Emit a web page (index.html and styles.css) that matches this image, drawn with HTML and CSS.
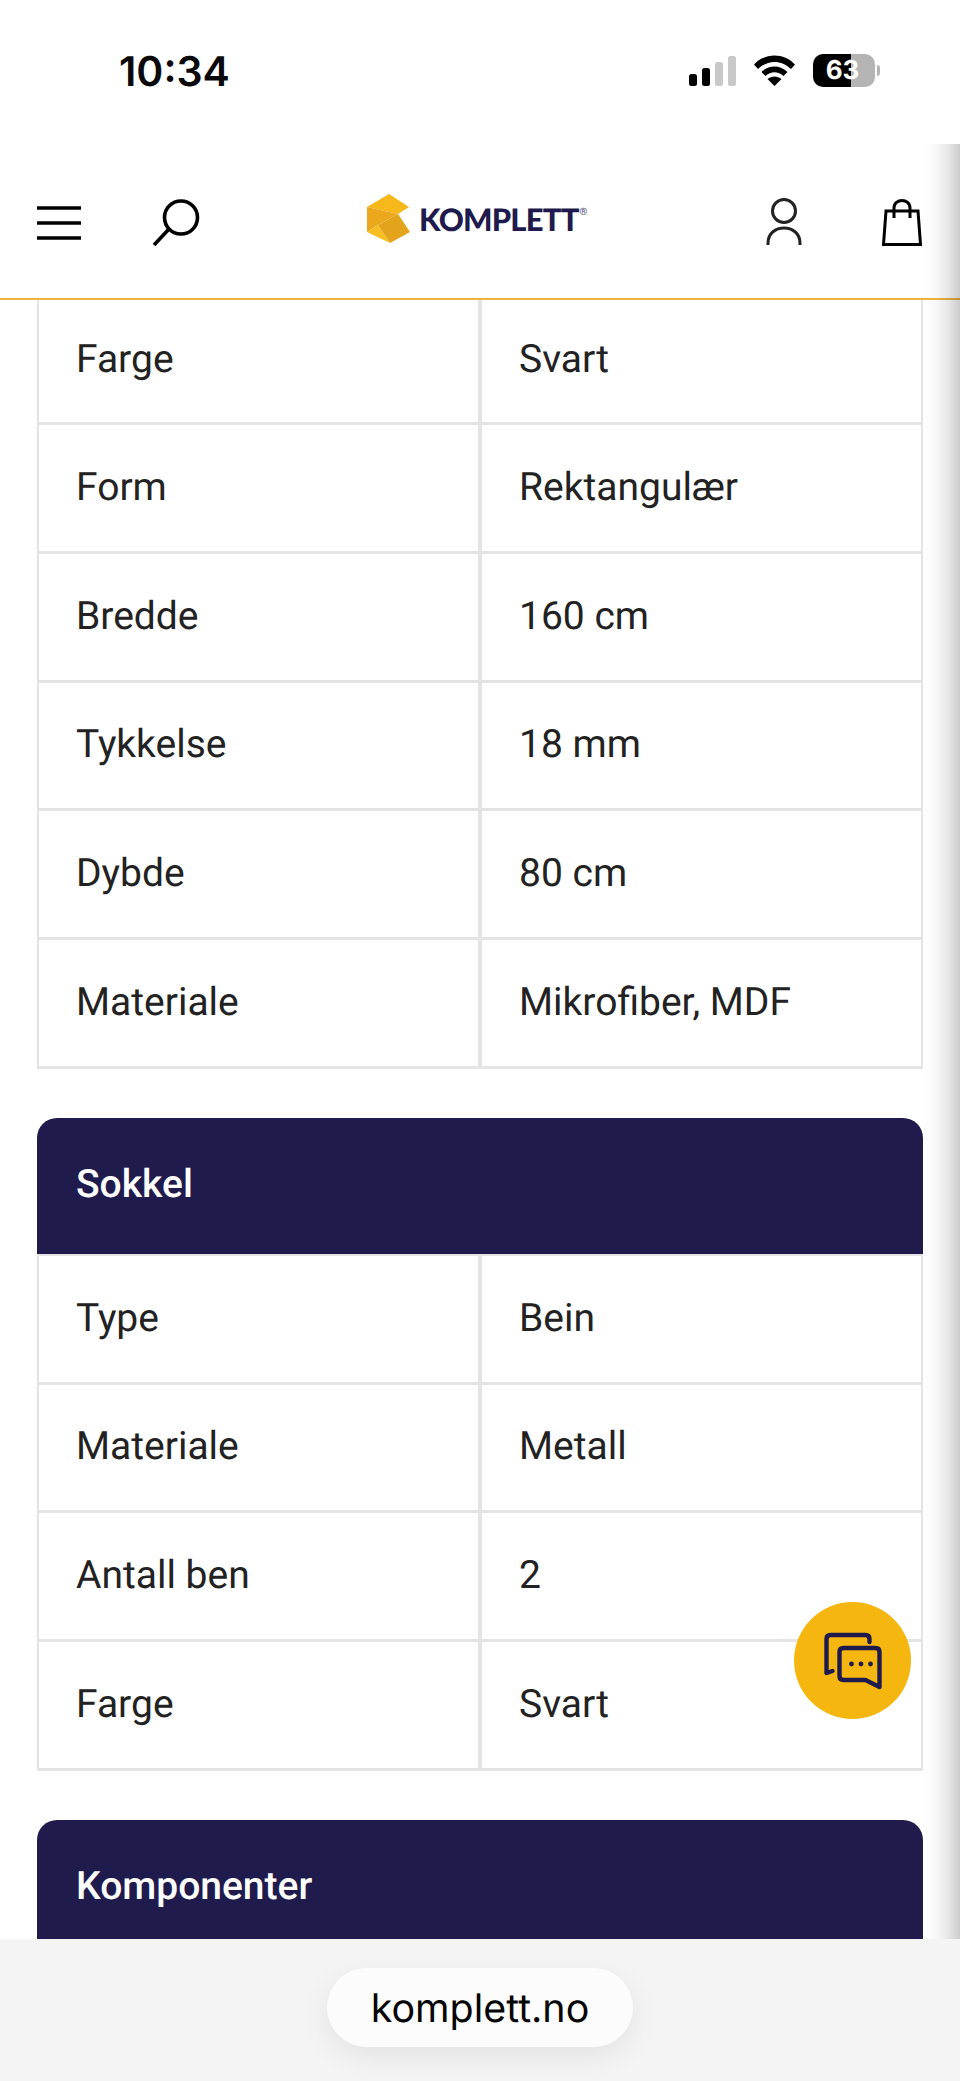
FILE: index.html
```html
<!DOCTYPE html>
<html lang="en">
<head>
    <meta charset="UTF-8">
    <meta name="viewport" content="width=device-width, initial-scale=1.0">
    <title>Komplett</title>
    <link rel="stylesheet" href="styles.css">
</head>
<body>
    <div class="status-bar">
        <span class="status-time">10:34</span>
        <div class="status-icons">
            <svg class="icon-signal" width="47" height="31" viewBox="0 0 47 31">
                <rect x="0" y="19" width="8" height="12" rx="2.5" fill="#000"/>
                <rect x="13" y="13" width="8" height="18" rx="2.5" fill="#000"/>
                <rect x="26" y="7" width="8" height="24" rx="2.5" fill="#c9c9c9"/>
                <rect x="39" y="1" width="8" height="30" rx="2.5" fill="#c9c9c9"/>
            </svg>
            <svg class="icon-wifi" width="41" height="31" viewBox="0 0 41 31">
                <path d="M0 9.500 C11 -2.500 30 -2.500 41 9.500 L37 14 C27.500 4.500 13.500 4.500 4 14 Z" fill="#000"/>
                <path d="M7.500 17 C14.500 9.500 26.500 9.500 33.500 17 L29.500 21 C24 16 17 16 11.500 21 Z" fill="#000"/>
                <path d="M20.500 31 L13.500 24 C18 20.500 23 20.500 27.500 24 Z" fill="#000"/>
            </svg>
            <div class="battery">
                <span class="battery-level">63</span>
            </div>
        </div>
    </div>

    <header class="site-header">
        <div class="header-left">
            <svg width="46" height="36" viewBox="0 0 46 36">
                <path d="M1 3 H45 M1 18 H45 M1 33 H45" stroke="#000" stroke-width="3.4"/>
            </svg>
            <svg width="48" height="48" viewBox="0 0 48 48">
                <circle cx="29" cy="18.500" r="16.500" fill="none" stroke="#000" stroke-width="3.6"/>
                <path d="M17 30 L2 46" stroke="#000" stroke-width="3.6"/>
            </svg>
        </div>
        <div class="logo">
            <svg width="44" height="50" viewBox="0 0 44 50">
                <path d="M23 0 L43 13 L32 20 L1 13 Z" fill="#f6b81a"/>
                <path d="M1 13 L32 20 L12 31 L1 38 Z" fill="#eca81c"/>
                <path d="M1 38 L12 31 L24 49 Z" fill="#f7bd22"/>
                <path d="M12 31 L32 20 L44 38 L24 49 Z" fill="#e3a31a"/>
            </svg>
            <span class="logo-text">KOMPLETT</span>
            <span class="logo-reg">®</span>
        </div>
        <div class="header-right">
            <svg width="36" height="48" viewBox="0 0 36 48">
                <circle cx="18" cy="13" r="11.500" fill="none" stroke="#222" stroke-width="3"/>
                <path d="M2 47 V45 C2 25 34 25 34 45 V47" fill="none" stroke="#222" stroke-width="3"/>
            </svg>
            <svg width="40" height="47" viewBox="0 0 40 47">
                <path d="M4 12 H36 L38.500 45.500 H1.500 Z" fill="none" stroke="#000" stroke-width="3"/>
                <path d="M12 19 V9 C12 -1 28 -1 28 9 V19" fill="none" stroke="#000" stroke-width="3"/>
            </svg>
        </div>
    </header>

    <main class="specs">
        <div class="spec-table">
            <div class="spec-row spec-row-cut"><div class="spec-cell">Farge</div><div class="spec-cell">Svart</div></div>
            <div class="spec-row"><div class="spec-cell">Form</div><div class="spec-cell">Rektangulær</div></div>
            <div class="spec-row"><div class="spec-cell">Bredde</div><div class="spec-cell">160 cm</div></div>
            <div class="spec-row"><div class="spec-cell">Tykkelse</div><div class="spec-cell">18 mm</div></div>
            <div class="spec-row"><div class="spec-cell">Dybde</div><div class="spec-cell">80 cm</div></div>
            <div class="spec-row"><div class="spec-cell">Materiale</div><div class="spec-cell">Mikrofiber, MDF</div></div>
        </div>

        <h2 class="spec-title">Sokkel</h2>
        <div class="spec-table">
            <div class="spec-row"><div class="spec-cell">Type</div><div class="spec-cell">Bein</div></div>
            <div class="spec-row"><div class="spec-cell">Materiale</div><div class="spec-cell">Metall</div></div>
            <div class="spec-row"><div class="spec-cell">Antall ben</div><div class="spec-cell">2</div></div>
            <div class="spec-row"><div class="spec-cell">Farge</div><div class="spec-cell">Svart</div></div>
        </div>

        <h2 class="spec-title">Komponenter</h2>
    </main>

    <div class="edge-shadow"></div>

    <button class="chat-button" type="button" aria-label="Chat">
        <svg width="60" height="60" viewBox="1.500 2 60 60">
            <path d="M48 13 V10 C48 7.500 46.500 6 44 6 H9 C6.500 6 5 7.500 5 10 V44 L11 42" fill="none" stroke="#1f1a4d" stroke-width="4.400" stroke-linecap="round" stroke-linejoin="round"/>
            <path d="M22 19 H54 C56.500 19 58 20.500 58 23 V58 L44 51 H22 C19.500 51 18 49.500 18 47 V23 C18 20.500 19.500 19 22 19 Z" fill="none" stroke="#1f1a4d" stroke-width="4.400" stroke-linejoin="round"/>
            <circle cx="30" cy="35" r="2.400" fill="#1f1a4d"/>
            <circle cx="39.500" cy="35" r="2.400" fill="#1f1a4d"/>
            <circle cx="49" cy="35" r="2.400" fill="#1f1a4d"/>
        </svg>
    </button>

    <div class="address-bar">
        <div class="address-pill">komplett.no</div>
    </div>
</body>
</html>
```

FILE: styles.css
```css
html, body {
  margin: 0;
  padding: 0;
}
body {
  width: 960px;
  height: 2081px;
  overflow: hidden;
  position: relative;
  background: #ffffff;
  font-family: Roboto, sans-serif;
  color: #222;
  text-rendering: geometricPrecision;
}

/* phone status bar */
.status-bar {
  height: 144px;
  box-sizing: border-box;
  padding: 50px 85px 0 119px;
  display: flex;
  justify-content: space-between;
  align-items: flex-start;
}
.status-time {
  font-family: Inter, sans-serif;
  font-size: 41px;
  font-weight: 600;
  line-height: 42px;
  color: #0a0a0a;
}
.status-icons {
  display: flex;
  align-items: center;
  gap: 18px;
  padding-top: 4px;
}
.battery {
  width: 62px;
  height: 33px;
  border-radius: 10px;
  background: linear-gradient(to right, #000 0, #000 62%, #b4b4b4 62%);
  position: relative;
  display: flex;
  justify-content: center;
  align-items: center;
}
.battery::after {
  content: "";
  position: absolute;
  right: -5px;
  top: 11px;
  width: 3px;
  height: 11px;
  border-radius: 0 3px 3px 0;
  background: #b4b4b4;
}
.battery-level {
  font-family: Inter, sans-serif;
  font-size: 26px;
  font-weight: 700;
  color: #fff;
  margin-right: 3px;
}

/* site header */
.site-header {
  height: 154px;
  box-sizing: content-box;
  border-bottom: 2px solid #edb53b;
  padding: 0 38px 0 36px;
  display: flex;
  align-items: center;
  justify-content: space-between;
  position: relative;
}
.header-left {
  display: flex;
  align-items: center;
  gap: 70px;
  padding-top: 4px;
}
.header-right {
  display: flex;
  align-items: center;
  gap: 80px;
  padding-top: 2px;
}
.logo {
  position: absolute;
  left: 366px;
  top: 50px;
  display: flex;
  align-items: center;
  gap: 9px;
}
.logo-text {
  font-family: Lato, sans-serif;
  font-size: 31px;
  font-weight: 900;
  letter-spacing: -0.8px;
  color: #1f1a4d;
}
.logo-reg {
  font-size: 10px;
  color: #55527a;
  margin: -14px 0 0 -8px;
}

/* spec tables */
.specs {
  padding: 0 37px;
}
.spec-table {
  display: flex;
  flex-direction: column;
}
.spec-row {
  display: grid;
  grid-template-columns: 1fr 1fr;
  height: 128.75px;
  box-sizing: border-box;
  border-bottom: 3px solid #e4e4e4;
}
.spec-row-cut {
  height: 125px;
}
.spec-cell {
  display: flex;
  align-items: center;
  padding: 0 0 2px 37px;
  border-left: 2px solid #e4e4e4;
  border-right: 2px solid #e4e4e4;
  font-size: 39px;
}
.spec-row-cut .spec-cell {
  padding-bottom: 4px;
}
.spec-title {
  margin: 49px 0 0;
  height: 136px;
  box-sizing: border-box;
  padding: 0 0 3px 39px;
  display: flex;
  align-items: center;
  border-radius: 20px 20px 0 0;
  background: #1f1b4d;
  color: #fff;
  font-size: 39px;
  font-weight: 500;
}
.spec-title + .spec-table {
  border-top: 2px solid #e4e4e4;
}

.edge-shadow {
  position: absolute;
  top: 144px;
  right: 0;
  width: 38px;
  bottom: 0;
  background: linear-gradient(to right, rgba(0, 0, 0, 0), rgba(0, 0, 0, 0.03) 40%, rgba(0, 0, 0, 0.1) 70%, rgba(0, 0, 0, 0.2));
}

.chat-button {
  position: absolute;
  left: 794px;
  top: 1602px;
  width: 117px;
  height: 117px;
  padding: 0;
  border: none;
  border-radius: 50%;
  background: #f5b60f;
  display: flex;
  align-items: center;
  justify-content: center;
}

/* browser address bar */
.address-bar {
  position: absolute;
  left: 0;
  right: 0;
  top: 1939px;
  bottom: 0;
  background: #f4f4f4;
  display: flex;
  justify-content: center;
  padding-top: 29px;
  box-sizing: border-box;
}
.address-pill {
  width: 306px;
  height: 79px;
  border-radius: 40px;
  background: #fcfcfc;
  box-shadow: 0 10px 30px rgba(0, 0, 0, 0.07);
  display: flex;
  align-items: center;
  justify-content: center;
  font-family: Inter, sans-serif;
  font-size: 39.4px;
  color: #050505;
}
```
